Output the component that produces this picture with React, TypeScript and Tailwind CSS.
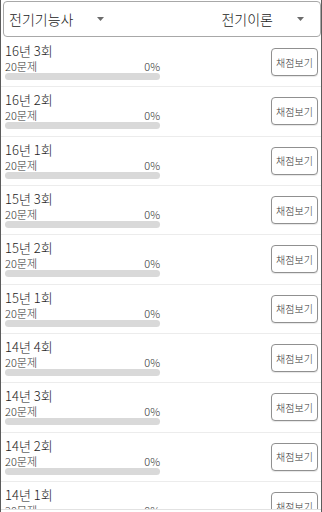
import { useState } from "react";

const FONT = "font-['Noto_Sans_CJK_KR','Roboto',sans-serif]";

const ROUNDS = [
  "16년 3회", "16년 2회", "16년 1회",
  "15년 3회", "15년 2회", "15년 1회",
  "14년 4회", "14년 3회", "14년 2회", "14년 1회",
];

function Caret() {
  return (
    <svg width="7" height="4" viewBox="0 0 7 4" className="shrink-0">
      <path d="M0 0h7L3.5 4z" fill="#6b6b6b" />
    </svg>
  );
}

function Spinner({ value }: { value: string }) {
  return (
    <div className="flex items-center gap-[24px]">
      <span className="text-[14px] leading-[20px] font-light text-[#222]">{value}</span>
      <Caret />
    </div>
  );
}

function RoundRow({ title }: { title: string }) {
  const solved = 0;
  return (
    <div className="h-[49.33px] flex items-center justify-between border-b border-[#ececec] shrink-0">
      <div className="w-[155px] ml-[4px] self-start pt-[4px]">
        <div className="text-[13px] leading-[17px] font-light text-[#222]">{title}</div>
        <div className="flex justify-between text-[11px] leading-[14px] font-light text-[#333]">
          <span>20문제</span>
          <span>{solved}%</span>
        </div>
        <div className="h-[7px] rounded-full bg-[#d9d9d9] overflow-hidden">
          <div className="h-full bg-[#4caf50]" style={{ width: `${solved}%` }} />
        </div>
      </div>
      <button className="w-[47px] h-[28px] mr-[3px] rounded-[4px] border border-[#909090] bg-white text-[10px] font-light text-[#333] shadow-[0_1px_1px_rgba(0,0,0,0.1)]">
        채점보기
      </button>
    </div>
  );
}

export default function App() {
  const [license] = useState("전기기능사");
  const [subject] = useState("전기이론");

  return (
    <div className={`${FONT} w-[322px] h-[512px] bg-white border-l border-r border-[#5c5c5c] overflow-hidden`}>
      <div className="h-[510px] overflow-hidden border-b border-[#e2e2e2] flex flex-col">
        <div className="mt-[1px] mb-[1px] ml-[2px] h-[36px] shrink-0 rounded-[4px] border border-[#a8a8a8] flex items-center justify-between pl-[5px] pr-[16px]">
          <Spinner value={license} />
          <Spinner value={subject} />
        </div>
        {ROUNDS.map(r => (
          <RoundRow key={r} title={r} />
        ))}
      </div>
    </div>
  );
}
